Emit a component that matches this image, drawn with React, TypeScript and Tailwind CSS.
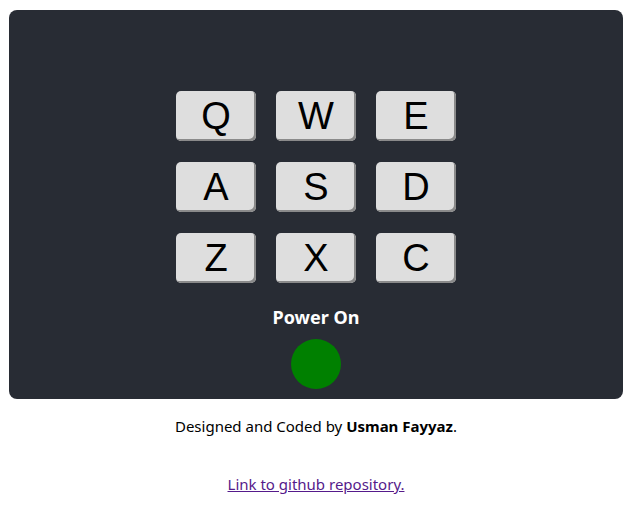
const keys = ["Q", "W", "E", "A", "S", "D", "Z", "X", "C"];

export default function App() {
  return (
    <div className="min-h-[510px] bg-white pt-[10px] font-['Segoe_UI','Noto_Sans',sans-serif]">
      <div className="mx-[9px] flex flex-col items-center rounded-lg bg-[#282c34] pt-[81px] pb-[10px]">
        <div className="grid grid-cols-[repeat(3,80px)] gap-x-[20px] gap-y-[21px]">
          {keys.map((k) => (
            <div
              key={k}
              className="flex h-[50px] w-[80px] items-center justify-center rounded-[5px] bg-[#dedede] font-['Liberation_Sans',Arial,sans-serif] text-[38px] text-black shadow-[inset_-2px_-2px_0_#8a8a8a]"
            >
              {k}
            </div>
          ))}
        </div>
        <p className="mt-[22px] text-[18px] font-bold leading-[24px] text-white">Power On</p>
        <div className="mt-[10px] h-[50px] w-[50px] rounded-full bg-[#008000]" />
      </div>
      <p className="mt-[15px] text-center text-[15px] leading-[24px] text-black">
        Designed and Coded by <span className="font-bold">Usman Fayyaz</span>.
      </p>
      <p className="mt-[34px] text-center text-[15px] leading-[24px]">
        <a href="#" className="text-[#551a8b] underline">
          Link to github repository.
        </a>
      </p>
    </div>
  );
}
